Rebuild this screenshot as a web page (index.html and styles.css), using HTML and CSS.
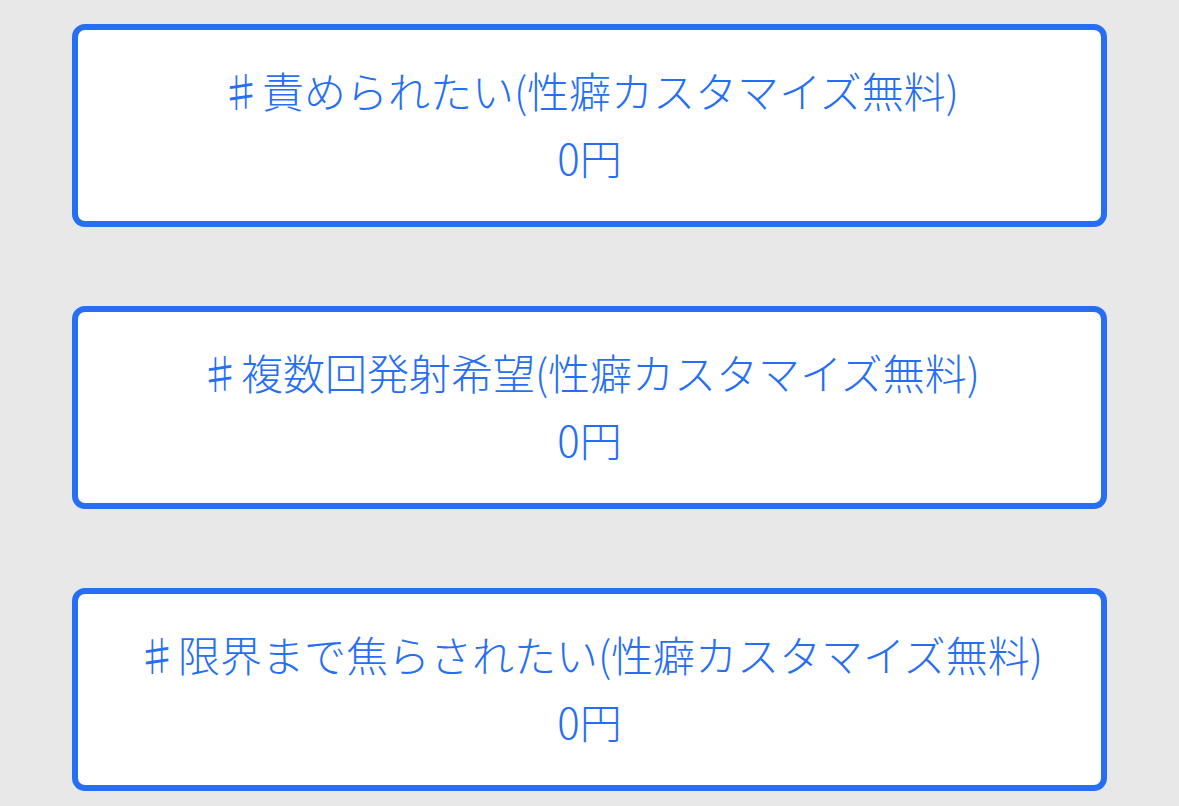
FILE: index.html
```html
<!DOCTYPE html>
<html lang="ja">
<head>
	<meta charset="utf-8">
	<title>性癖カスタマイズ</title>
	<link rel="stylesheet" href="styles.css">
</head>
<body>
	<div class="options">
		<div class="option">
			<div class="option_name">♯責められたい(性癖カスタマイズ無料)</div>
			<div class="option_price">0円</div>
		</div>
		<div class="option">
			<div class="option_name">♯複数回発射希望(性癖カスタマイズ無料)</div>
			<div class="option_price">0円</div>
		</div>
		<div class="option">
			<div class="option_name">♯限界まで焦らされたい(性癖カスタマイズ無料)</div>
			<div class="option_price">0円</div>
		</div>
	</div>
</body>
</html>
```

FILE: styles.css
```css
body {
	margin: 0;
	background: #e8e8e8;
	font-family: "Noto Sans CJK JP", "Noto Sans", sans-serif;
}
.options {
	display: flex;
	flex-direction: column;
	gap: 79px;
	padding: 24px 72px;
}
.option {
	height: 191px;
	padding-bottom: 6px;
	box-sizing: content-box;
	height: 185px;
	border: 6px solid #266ff4;
	border-radius: 13px;
	background: white;
	color: #266ff4;
	font-size: 42px;
	font-weight: 300;
	line-height: 67px;
	text-align: center;
	display: flex;
	flex-direction: column;
	justify-content: center;
}
```
